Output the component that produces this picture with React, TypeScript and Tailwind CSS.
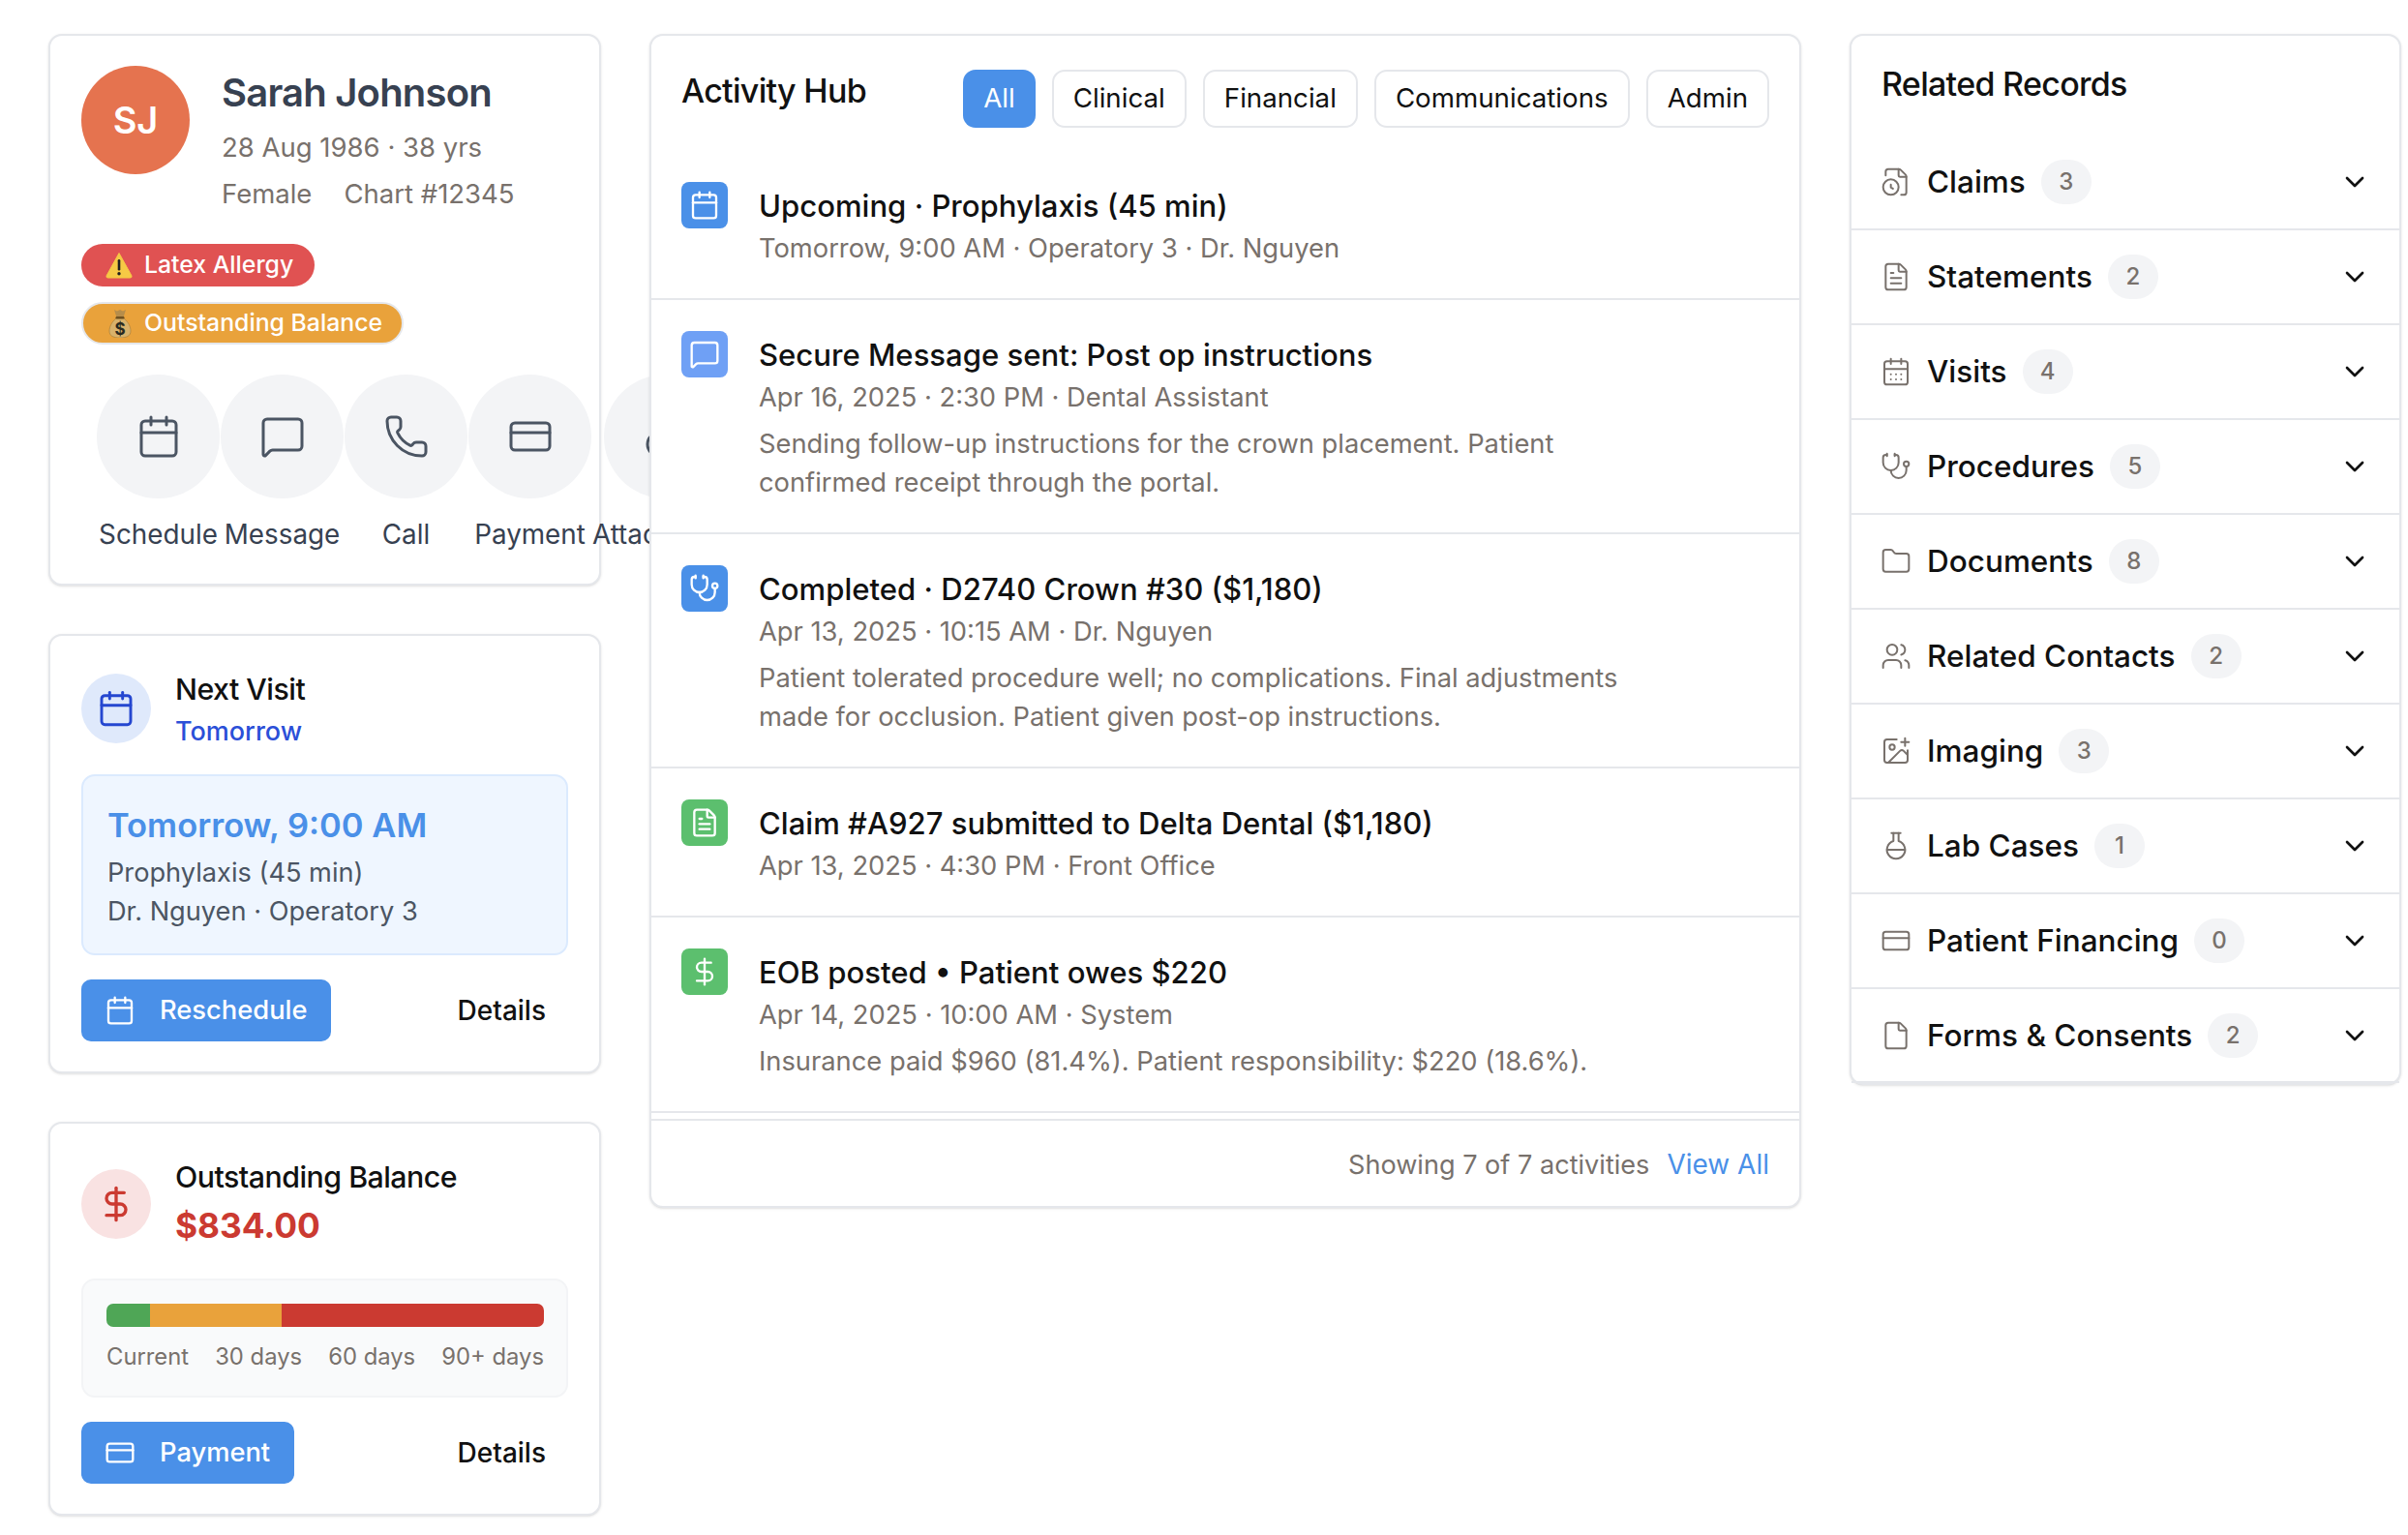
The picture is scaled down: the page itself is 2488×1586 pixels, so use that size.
import {
  Calendar, CalendarDays, ChevronDown, CreditCard, DollarSign, File, FileClock, FileText, FlaskRound,
  Folder, ImagePlus, MessageSquare, Paperclip, Phone, Stethoscope, Users,
} from 'lucide-react'

const actions = [
  { label: 'Schedule', icon: Calendar },
  { label: 'Message', icon: MessageSquare },
  { label: 'Call', icon: Phone },
  { label: 'Payment', icon: CreditCard },
  { label: 'Attachment', icon: Paperclip },
]

const activities = [
  {
    icon: Calendar,
    tile: 'bg-[#4a90e8]',
    title: 'Upcoming · Prophylaxis (45 min)',
    meta: 'Tomorrow, 9:00 AM · Operatory 3 · Dr. Nguyen',
    lines: [],
  },
  {
    icon: MessageSquare,
    tile: 'bg-[#6fa0f5]',
    title: 'Secure Message sent: Post op instructions',
    meta: 'Apr 16, 2025 · 2:30 PM · Dental Assistant',
    lines: ['Sending follow-up instructions for the crown placement. Patient', 'confirmed receipt through the portal.'],
  },
  {
    icon: Stethoscope,
    tile: 'bg-[#4a90e8]',
    title: 'Completed · D2740 Crown #30 ($1,180)',
    meta: 'Apr 13, 2025 · 10:15 AM · Dr. Nguyen',
    lines: ['Patient tolerated procedure well; no complications. Final adjustments', 'made for occlusion. Patient given post-op instructions.'],
  },
  {
    icon: FileText,
    tile: 'bg-[#5cbf6e]',
    title: 'Claim #A927 submitted to Delta Dental ($1,180)',
    meta: 'Apr 13, 2025 · 4:30 PM · Front Office',
    lines: [],
  },
  {
    icon: DollarSign,
    tile: 'bg-[#5cbf6e]',
    title: 'EOB posted • Patient owes $220',
    meta: 'Apr 14, 2025 · 10:00 AM · System',
    lines: ['Insurance paid $960 (81.4%). Patient responsibility: $220 (18.6%).'],
  },
]

const records = [
  { label: 'Claims', count: 3, icon: FileClock },
  { label: 'Statements', count: 2, icon: FileText },
  { label: 'Visits', count: 4, icon: CalendarDays },
  { label: 'Procedures', count: 5, icon: Stethoscope },
  { label: 'Documents', count: 8, icon: Folder },
  { label: 'Related Contacts', count: 2, icon: Users },
  { label: 'Imaging', count: 3, icon: ImagePlus },
  { label: 'Lab Cases', count: 1, icon: FlaskRound },
  { label: 'Patient Financing', count: 0, icon: CreditCard },
  { label: 'Forms & Consents', count: 2, icon: File },
]

const tabs = ['All', 'Clinical', 'Financial', 'Communications', 'Admin']

function WarningEmoji() {
  return (
    <svg width="30" height="28" viewBox="0 0 30 28">
      <path d="M15 1.500 L28 25 Q28.5 27 26.500 27 L3.500 27 Q1.500 27 2 25 Z" fill="#f6c945" stroke="#f6c945" strokeLinejoin="round" />
      <rect x="13.700" y="8" width="2.600" height="11.500" rx="1.300" fill="#1f1f1f" />
      <circle cx="15" cy="22.800" r="1.700" fill="#1f1f1f" />
    </svg>
  )
}

function MoneyBagEmoji() {
  return (
    <svg width="24" height="30" viewBox="0 0 24 30">
      <path d="M6 1 L9 2.500 L12 1 L15 2.500 L18 1 L15.500 9 L8.500 9 Z" fill="#b78d4a" />
      <path d="M8 10 C3 14 1 19 1 23 C1 28 5 30 12 30 C19 30 23 28 23 23 C23 19 21 14 16 10 Z" fill="#d9b26b" stroke="#a37a38" strokeWidth="0.600" />
      <rect x="7.500" y="8" width="9" height="2.400" rx="1.200" fill="#6f5020" />
      <text x="12" y="27" textAnchor="middle" fontSize="17" fontWeight="700" fill="#2a2a1f">$</text>
    </svg>
  )
}

function ActionButton({ label, icon: Icon }: { label: string; icon: typeof Calendar }) {
  return (
    <button className="flex h-16 items-center gap-[25px] rounded-[10px] bg-[#4a90e8] pl-[24px] pr-[25px] text-[27.3px] font-medium text-white">
      <Icon size={32} strokeWidth={1.75} />
      {label}
    </button>
  )
}

export default function App() {
  return (
    <div className="min-h-[1586px] bg-white pl-[50px] pt-[35px] font-['Inter',sans-serif] text-[#111111]">
      <div className="grid grid-cols-[571px_1190px_570px] items-start gap-[50px]">
        {/* Left column */}
        <div className="flex flex-col gap-[50px]">
          {/* Patient */}
          <div className="rounded-[14px] border-2 border-[#e5e7eb] bg-white px-[32px] pb-[31px] pt-[31px] shadow-sm">
            <div className="flex gap-[33px]">
              <div className="flex h-[112px] w-[112px] shrink-0 items-center justify-center rounded-full bg-[#e5734f] text-[38px] font-semibold text-white">
                SJ
              </div>
              <div className="pt-[4px]">
                <div className="text-[40px] font-semibold leading-[48px] tracking-[-0.8px] text-[#374151]">Sarah Johnson</div>
                <div className="mt-2 text-[27.5px] leading-[48px] text-[#78716c]">28 Aug 1986 · 38 yrs</div>
                <div className="flex gap-[33px] text-[27.5px] leading-[48px] text-[#78716c]">
                  <span>Female</span>
                  <span>Chart #12345</span>
                </div>
              </div>
            </div>
            <div className="mt-[28px] flex flex-col items-start gap-[16px]">
              <div className="flex h-[44px] items-center gap-[11px] rounded-full bg-[#e05252] pl-[24px] pr-[22px] text-[24.8px] font-medium text-white">
                <WarningEmoji />
                Latex Allergy
              </div>
              <div className="flex h-[44px] items-center gap-[13px] rounded-full border-2 border-[#e5e7eb] bg-[#e9a23b] pl-[26px] pr-[20px] text-[24.8px] font-medium text-white">
                <MoneyBagEmoji />
                Outstanding Balance
              </div>
            </div>
            <div className="ml-[16px] mt-[31px] flex gap-[1px]">
              {actions.map(({ label, icon: Icon }) => (
                <div key={label} className="flex min-w-[127px] shrink-0 flex-col items-center">
                  <div className="flex h-[128px] w-[127px] items-center justify-center rounded-full bg-[#f3f4f6] text-[#4b5563]">
                    <Icon size={48} strokeWidth={1.5} />
                  </div>
                  <div className="mt-[17px] whitespace-nowrap text-[27.8px] leading-[40px] text-[#374151]">{label}</div>
                </div>
              ))}
            </div>
          </div>

          {/* Next visit */}
          <div className="rounded-[14px] border-2 border-[#e5e7eb] bg-white px-[32px] pb-[31px] pt-[35px] shadow-sm">
            <div className="flex items-start gap-[25px]">
              <div className="mt-[4px] flex h-[72px] w-[72px] items-center justify-center rounded-full bg-[#dfe9fb] text-[#2547d0]">
                <Calendar size={40} strokeWidth={1.75} />
              </div>
              <div>
                <div className="text-[30.300px] font-medium leading-[40px] tracking-[-0.5px]">Next Visit</div>
                <div className="mt-[4px] text-[27px] font-medium leading-[40px] text-[#2b4fd8]">Tomorrow</div>
              </div>
            </div>
            <div className="mt-[24px] rounded-[14px] border-2 border-[#dbeafe] bg-[#eff6ff] pb-[23px] pl-[25px] pt-[27px]">
              <div className="text-[34.500px] font-semibold leading-[48px] text-[#4a90e8]">Tomorrow, 9:00 AM</div>
              <div className="mt-[5px] text-[27.2px] leading-[40px] text-[#4b5563]">Prophylaxis (45 min)</div>
              <div className="text-[27.2px] leading-[40px] text-[#4b5563]">Dr. Nguyen · Operatory 3</div>
            </div>
            <div className="mt-[25px] flex items-center justify-between">
              <ActionButton label="Reschedule" icon={Calendar} />
              <span className="pr-[23px] text-[28px] font-medium">Details</span>
            </div>
          </div>

          {/* Balance */}
          <div className="rounded-[14px] border-2 border-[#e5e7eb] bg-white px-[32px] pb-[31px] pt-[35px] shadow-sm">
            <div className="flex items-start gap-[25px]">
              <div className="mt-[12px] flex h-[72px] w-[72px] items-center justify-center rounded-full bg-[#f9e2e2] text-[#cb3a31]">
                <DollarSign size={40} strokeWidth={2} />
              </div>
              <div>
                <div className="text-[30.300px] font-medium leading-[40px] tracking-[-0.5px]">Outstanding Balance</div>
                <div className="mt-[8px] text-[35.300px] font-bold leading-[46px] text-[#cb3a31]">$834.00</div>
              </div>
            </div>
            <div className="mt-[31px] rounded-[14px] border-2 border-[#f3f4f6] bg-[#f9fafb] pb-[22px] pl-[24px] pr-[23px] pt-[24px]">
              <div className="flex h-[24px] overflow-hidden rounded-[7px]">
                <div className="w-[45px] bg-[#4fa656]" />
                <div className="w-[136px] bg-[#e9a23b]" />
                <div className="flex-1 bg-[#cb3a31]" />
              </div>
              <div className="mt-[13px] flex justify-between text-[23.8px] leading-[36px] text-[#78716c]">
                <span>Current</span>
                <span>30 days</span>
                <span>60 days</span>
                <span>90+ days</span>
              </div>
            </div>
            <div className="mt-[25px] flex items-center justify-between">
              <ActionButton label="Payment" icon={CreditCard} />
              <span className="pr-[23px] text-[28px] font-medium">Details</span>
            </div>
          </div>
        </div>

        {/* Activity hub */}
        <div className="relative rounded-[14px] border-2 border-[#e5e7eb] bg-white shadow-sm">
          <div className="flex items-start justify-between pb-[24px] pl-[31px] pr-[31px] pt-[35px]">
            <div className="-mt-[2px] text-[34px] font-medium leading-[48px] tracking-[-0.7px]">Activity Hub</div>
            <div className="flex gap-[17px]">
              {tabs.map((tab) => (
                <button
                  key={tab}
                  className={
                    tab === 'All'
                      ? 'h-[60px] rounded-[13px] bg-[#4a90e8] px-[21px] text-[27.7px] text-white'
                      : 'h-[60px] rounded-[13px] border-2 border-[#e5e7eb] bg-white px-[20px] text-[27.7px] text-[#111111]'
                  }
                >
                  {tab}
                </button>
              ))}
            </div>
          </div>

          {activities.map(({ icon: Icon, tile, title, meta, lines }) => (
            <div key={title} className="flex gap-[32px] border-b-2 border-[#e5e7eb] pb-[31px] pl-[31px] pr-[32px] pt-[32px]">
              <div className={`flex h-[48px] w-[48px] shrink-0 items-center justify-center rounded-[8px] text-white ${tile}`}>
                <Icon size={32} strokeWidth={1.75} />
              </div>
              <div className="pt-[3px]">
                <div className="text-[31.1px] font-medium leading-[44px]">{title}</div>
                <div className="mt-[2px] text-[27.3px] leading-[40px] text-[#78716c]">{meta}</div>
                {lines.length > 0 && (
                  <div className="mt-[8px] text-[27.3px] leading-[40px] text-[#78716c]">
                    {lines.map((line) => (
                      <div key={line}>{line}</div>
                    ))}
                  </div>
                )}
              </div>
            </div>
          ))}

          <div className="mt-[6px] flex items-baseline justify-end gap-[18px] border-t-2 border-[#e5e7eb] pb-[22px] pr-[31px] pt-[25px] leading-[40px]">
            <span className="text-[27.1px] text-[#78716c]">Showing 7 of 7 activities</span>
            <span className="text-[28px] text-[#4a90e8]">View All</span>
          </div>
        </div>

        {/* Related records */}
        <div className="rounded-[14px] border-2 border-[#e5e7eb] bg-white shadow-sm">
          <div className="pb-[29px] pl-[31px] pt-[26px] text-[34px] font-medium leading-[48px] tracking-[-0.7px]">Related Records</div>
          {records.map(({ label, count, icon: Icon }) => (
            <div key={label} className="flex h-[98px] items-center border-b-2 border-[#e5e7eb] pl-[30px] pr-[30px] last:h-[97px]">
              <Icon size={32} strokeWidth={1.5} className="text-[#78716c]" />
              <span className="ml-[16px] text-[31.5px] font-medium">{label}</span>
              <span className="ml-[16px] flex h-[46px] w-[52px] items-center justify-center rounded-full bg-[#f3f4f6] text-[24px] font-medium text-[#78716c]">
                {count}
              </span>
              <ChevronDown size={32} strokeWidth={2} className="ml-auto" />
            </div>
          ))}
        </div>
      </div>
    </div>
  )
}
